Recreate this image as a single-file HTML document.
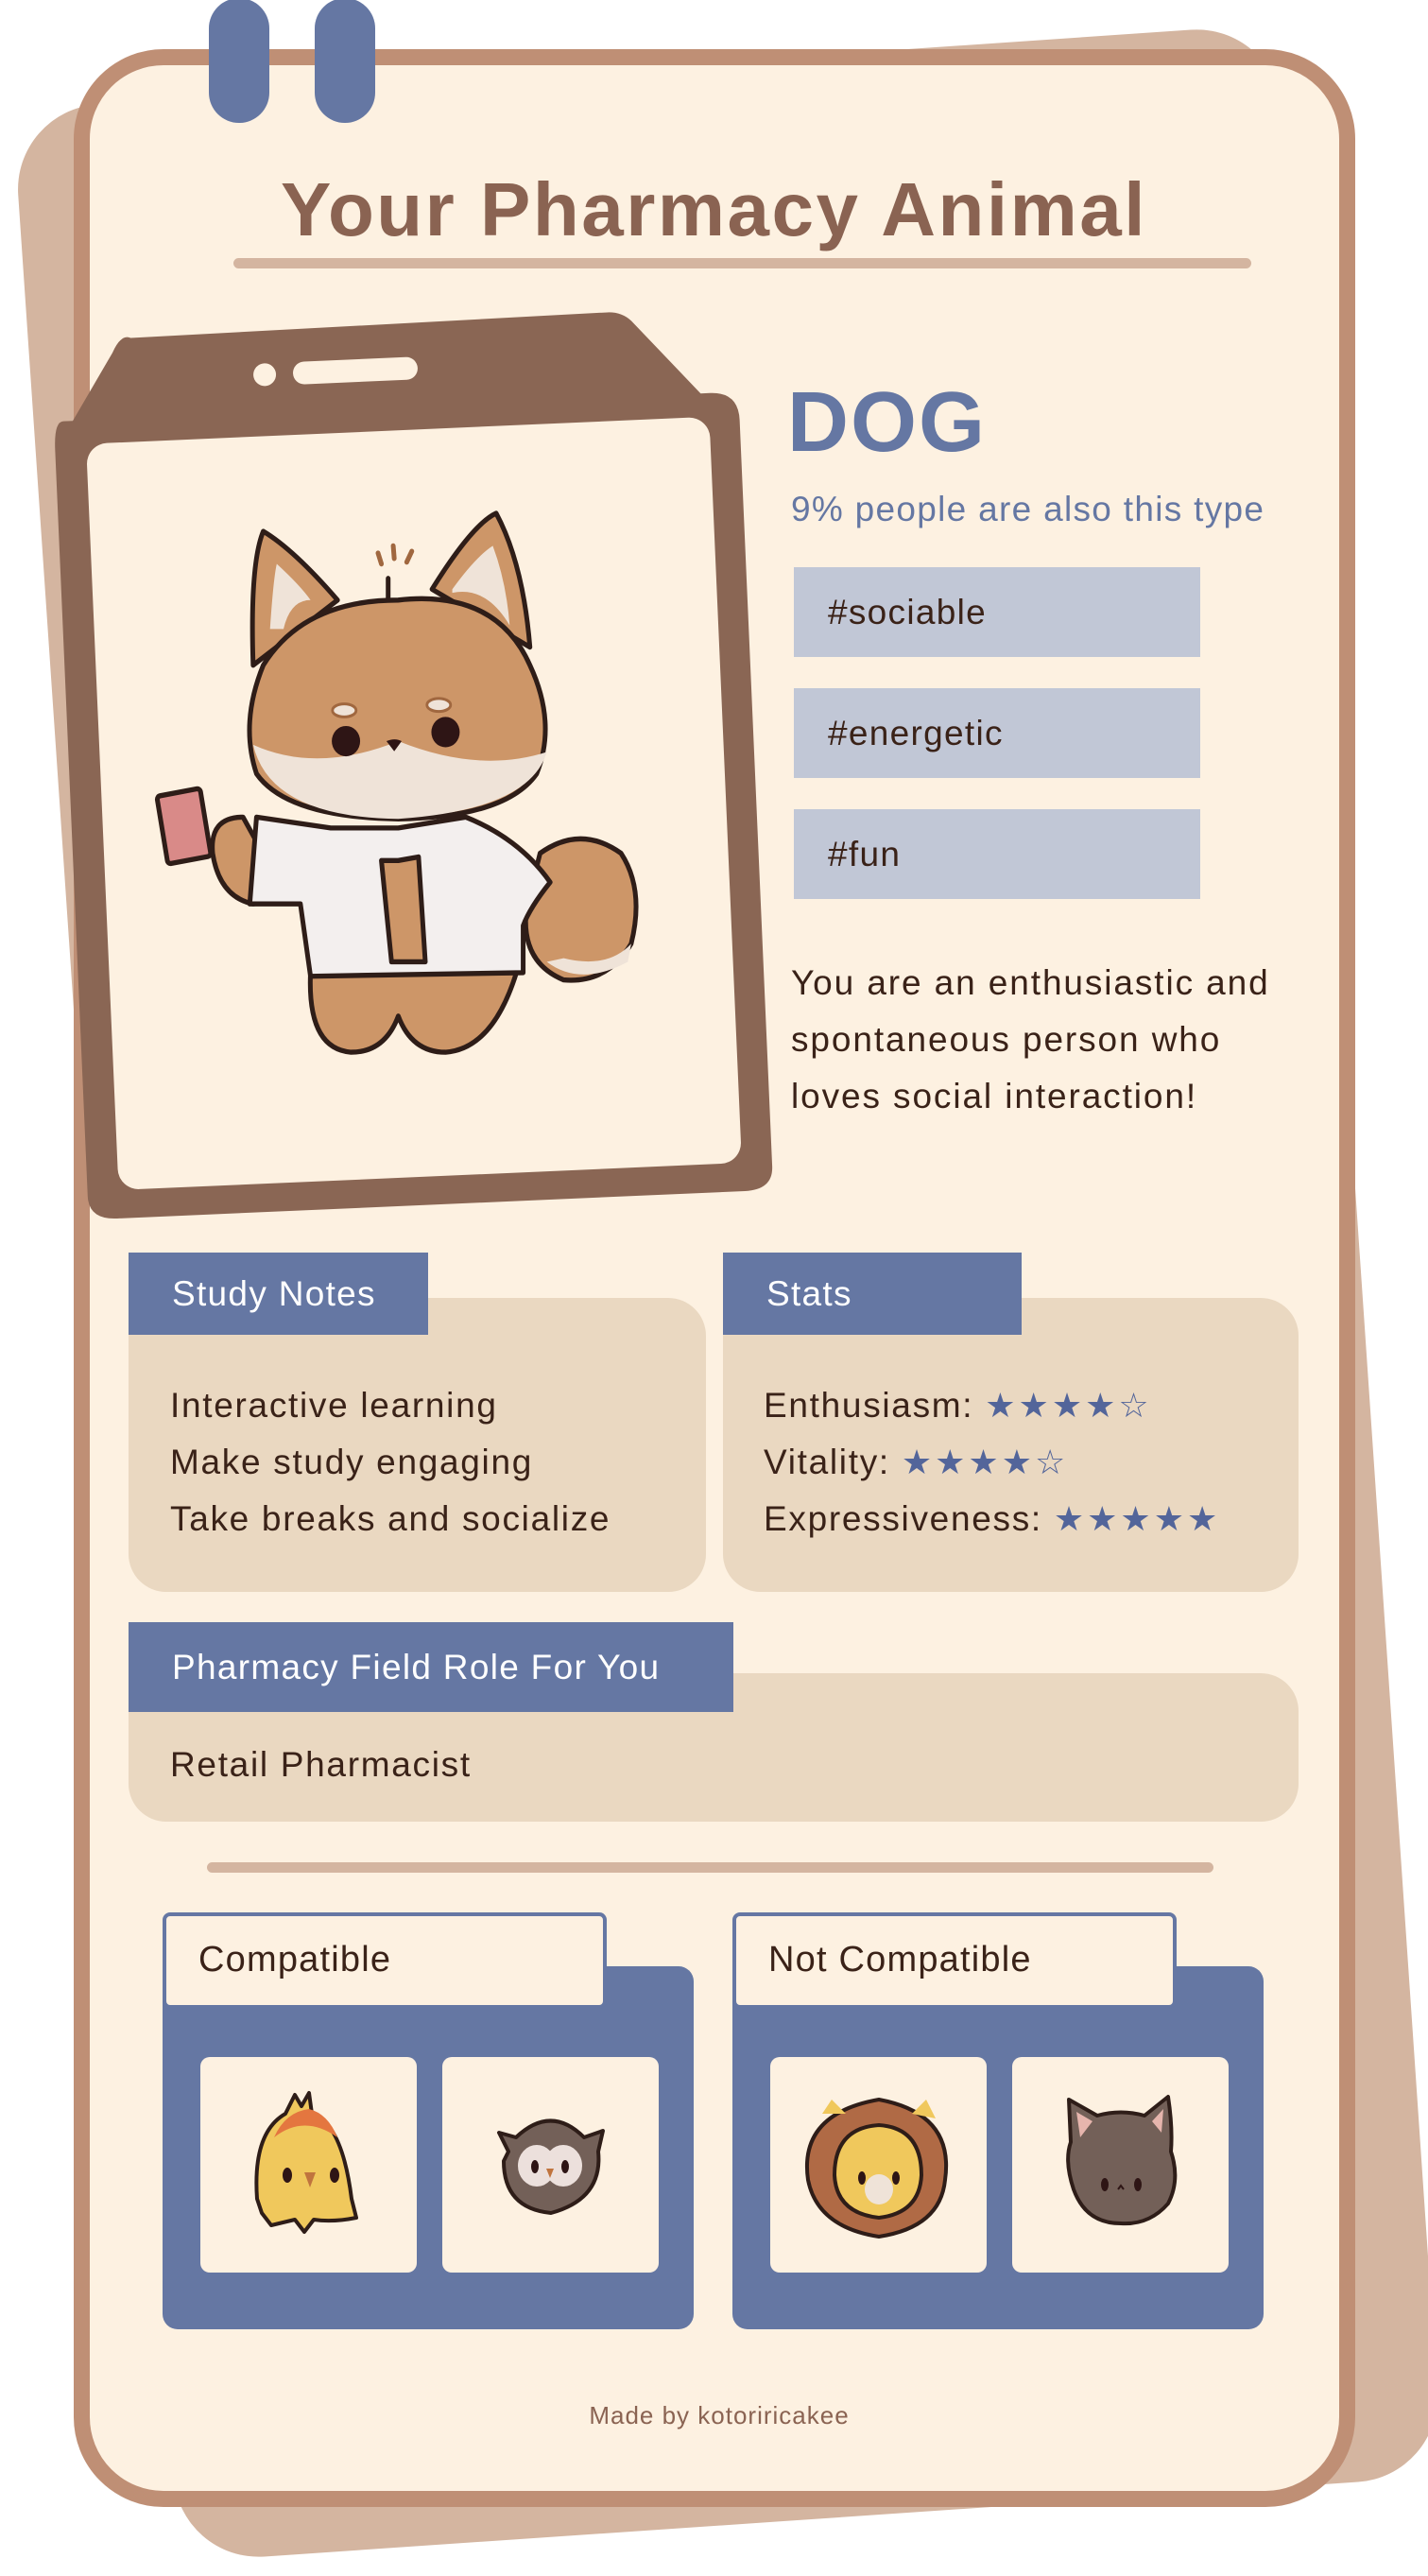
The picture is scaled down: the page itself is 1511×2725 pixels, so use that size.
<!DOCTYPE html>
<html><head><meta charset="utf-8"><style>
*{margin:0;padding:0;box-sizing:border-box}
body{width:1511px;height:2725px;background:#fff;position:relative;overflow:hidden;font-family:"Liberation Sans",sans-serif;color:#3a2218}
.abs{position:absolute}
.shadow{left:100px;top:68px;width:1340px;height:2600px;background:#d4b5a0;border-radius:90px;transform:rotate(-3.9deg)}
.card{left:78px;top:52px;width:1356px;height:2600px;background:#fdf1e1;border:17px solid #bf8f75;border-radius:95px}
.clip{width:64px;height:132px;background:#6577a3;border-radius:32px;top:-2px}
.title{left:0;width:1511px;top:176px;text-align:center;font-size:80px;font-weight:bold;color:#8a6352;letter-spacing:2.5px}
.bar{background:#d4b5a0;border-radius:6px}
.tag{left:840px;width:430px;height:95px;background:#c1c7d6;font-size:37px;letter-spacing:1.3px;line-height:95px;padding-left:36px;color:#3a2218}
.desc{left:837px;top:1010px;font-size:37px;letter-spacing:1.9px;line-height:60px;color:#3a2218}
.box{background:#ead8c1;border-radius:40px}
.hdr{background:#6577a3;color:#fff;font-size:37px;letter-spacing:1.3px;padding-left:46px}
.lines{font-size:37px;letter-spacing:1.7px;line-height:60px;color:#3a2218}
.star{color:#53659a;letter-spacing:3px;font-size:36px}
.panel{background:#6577a3;border-radius:16px}
.lbl{background:#fdf1e1;border:4px solid #6577a3;border-radius:8px;font-size:38px;letter-spacing:1.2px;padding-left:34px;line-height:92px;color:#3a2218}
.tile{background:#fdf1e1;border-radius:10px;width:229px;height:228px}
</style></head><body>
<div class="abs shadow"></div>
<div class="abs card"></div>
<div class="abs clip" style="left:221px"></div>
<div class="abs clip" style="left:333px"></div>
<div class="abs title">Your Pharmacy Animal</div>
<div class="abs bar" style="left:247px;top:273px;width:1077px;height:11px"></div>

<svg class="abs" style="left:0;top:0" width="900" height="1350" viewBox="0 0 900 1350">
<g transform="rotate(-2.5 435 850)">
<path d="M160 345 Q150 340 140 360 L95 430 L85 430 Q75 430 75 460 L75 1250 Q75 1275 105 1275 L770 1275 Q800 1275 800 1250 L800 460 Q800 430 770 430 L760 430 L690 350 Q680 340 665 340 Z" fill="#8a6654"/>
<rect x="108" y="455" width="660" height="790" rx="22" fill="#fdf1e1"/>
<circle cx="300" cy="390" r="12" fill="#fdf1e1"/>
<rect x="330" y="378" width="132" height="24" rx="12" fill="#fdf1e1"/>
</g>
</svg>

<svg class="abs" style="left:150px;top:520px" width="560" height="600" viewBox="0 0 1568 1568" preserveAspectRatio="none">
<g stroke="#2e1d18" stroke-width="14" stroke-linejoin="round" stroke-linecap="round">
<path d="M1180 1000 Q1300 920 1420 1000 Q1490 1100 1450 1250 Q1380 1360 1250 1350 Q1120 1300 1140 1150 Z" fill="#cd9668"/>
<path d="M1200 1300 Q1300 1370 1440 1300 L1450 1250 Q1380 1320 1250 1290 Z" fill="#efe3d8" stroke="none"/>
<path d="M330 480 Q320 200 360 110 Q450 160 580 300 Z" fill="#cd9668"/>
<path d="M860 270 Q980 90 1050 60 Q1130 200 1150 430 Z" fill="#cd9668"/>
<path d="M380 380 Q390 240 400 200 Q470 260 500 300 Q440 300 420 380 Z" fill="#efe3d8" stroke="none"/>
<path d="M920 270 Q990 180 1040 150 Q1080 250 1090 370 Q1020 260 920 280 Z" fill="#efe3d8" stroke="none"/>
<path d="M760 300 Q1050 270 1150 480 Q1230 640 1170 780 Q1080 900 760 905 Q430 900 340 780 Q290 640 360 480 Q480 300 760 300 Z" fill="#cd9668"/>
<path d="M330 700 Q520 780 760 690 Q1000 780 1200 720 Q1150 880 760 905 Q380 900 330 700 Z" fill="#efe3d8" stroke="none"/>
<path d="M300 900 Q200 900 210 1000 Q230 1120 330 1140 L430 1120 Z" fill="#cd9668"/>
<rect x="60" y="830" width="130" height="190" rx="10" fill="#d98a88" transform="rotate(-10 125 925)"/>
<path d="M500 1330 Q490 1540 620 1550 Q720 1550 760 1450 Q800 1550 900 1550 Q1040 1540 1110 1330 Z" fill="#cd9668"/>
<path d="M340 900 L560 930 L760 930 L960 900 Q1120 960 1210 1080 Q1150 1150 1130 1200 L1130 1330 L500 1340 L470 1140 L320 1140 Z" fill="#f3efee"/>
<path d="M710 1020 L760 1020 L820 1010 L840 1300 L740 1300 Z" fill="#cd9668"/>
<path d="M730 240 L730 300" fill="none"/>
</g>
<circle cx="605" cy="690" r="42" fill="#2e1515"/>
<circle cx="900" cy="665" r="42" fill="#2e1515"/>
<ellipse cx="600" cy="605" rx="35" ry="18" fill="#efe3d8" stroke="#a0673f" stroke-width="8"/>
<ellipse cx="880" cy="590" rx="35" ry="18" fill="#efe3d8" stroke="#a0673f" stroke-width="8"/>
<path d="M725 690 Q750 680 770 690 L748 718 Z" fill="#2e1515"/>
<path d="M700 170 L710 200 M745 150 L748 185 M800 165 L785 195" stroke="#a0673f" stroke-width="14" stroke-linecap="round"/>
</svg>

<div class="abs" style="left:833px;top:396px;font-size:90px;font-weight:bold;color:#6577a3;letter-spacing:2px">DOG</div>
<div class="abs" style="left:837px;top:518px;font-size:37px;letter-spacing:1.3px;color:#6577a3">9% people are also this type</div>
<div class="abs tag" style="top:600px">#sociable</div>
<div class="abs tag" style="top:728px">#energetic</div>
<div class="abs tag" style="top:856px">#fun</div>
<div class="abs desc">You are an enthusiastic and<br>spontaneous person who<br>loves social interaction!</div>

<div class="abs box" style="left:136px;top:1373px;width:611px;height:311px"></div>
<div class="abs hdr" style="left:136px;top:1325px;width:317px;height:87px;line-height:87px">Study Notes</div>
<div class="abs lines" style="left:180px;top:1457px">Interactive learning<br>Make study engaging<br>Take breaks and socialize</div>

<div class="abs box" style="left:765px;top:1373px;width:609px;height:311px"></div>
<div class="abs hdr" style="left:765px;top:1325px;width:316px;height:87px;line-height:87px">Stats</div>
<div class="abs lines" style="left:808px;top:1457px">Enthusiasm: <span class="star">★★★★☆</span><br>Vitality: <span class="star">★★★★☆</span><br>Expressiveness: <span class="star">★★★★★</span></div>

<div class="abs box" style="left:136px;top:1770px;width:1238px;height:157px"></div>
<div class="abs hdr" style="left:136px;top:1716px;width:640px;height:95px;line-height:95px">Pharmacy Field Role For You</div>
<div class="abs lines" style="left:180px;top:1837px">Retail Pharmacist</div>

<div class="abs bar" style="left:219px;top:1970px;width:1065px;height:11px"></div>

<div class="abs panel" style="left:172px;top:2080px;width:562px;height:384px"></div>
<div class="abs lbl" style="left:172px;top:2023px;width:470px;height:102px">Compatible</div>
<div class="abs panel" style="left:775px;top:2080px;width:562px;height:384px"></div>
<div class="abs lbl" style="left:775px;top:2023px;width:470px;height:102px">Not Compatible</div>

<div class="abs tile" style="left:212px;top:2176px"><svg width="229" height="228" viewBox="0 0 229 228">
<path d="M60 150 Q55 80 90 60 L100 40 L107 52 L115 38 L118 60 Q150 70 160 150 L165 170 Q140 175 120 172 L110 185 L100 172 L75 178 L65 165 Z" fill="#f0c85c" stroke="#2e1d18" stroke-width="4" stroke-linejoin="round"/>
<path d="M78 85 Q110 60 145 85 Q135 60 115 55 Q90 58 78 85Z" fill="#e4763f"/>
<ellipse cx="92" cy="125" rx="5" ry="8" fill="#2e1515"/><ellipse cx="142" cy="125" rx="5" ry="8" fill="#2e1515"/>
<path d="M110 122 L122 122 L116 138Z" fill="#c0743e"/></svg></div>
<div class="abs tile" style="left:468px;top:2176px"><svg width="229" height="228" viewBox="0 0 229 228">
<path d="M70 100 L60 80 L78 85 Q115 50 150 85 L170 78 L165 100 Q170 150 115 165 Q65 160 65 110 Z" fill="#736058" stroke="#2e1d18" stroke-width="4" stroke-linejoin="round"/>
<ellipse cx="100" cy="115" rx="20" ry="22" fill="#ece0dc"/><ellipse cx="128" cy="115" rx="20" ry="22" fill="#ece0dc"/>
<ellipse cx="98" cy="116" rx="4" ry="7" fill="#2e1515"/><ellipse cx="130" cy="116" rx="4" ry="7" fill="#2e1515"/>
<path d="M110 118 L118 118 L114 128Z" fill="#c0743e"/></svg></div>
<div class="abs tile" style="left:815px;top:2176px"><svg width="229" height="228" viewBox="0 0 229 228">
<path d="M40 130 Q30 60 115 45 Q195 60 185 130 Q180 180 115 190 Q50 180 40 130Z" fill="#b06a45" stroke="#2e1d18" stroke-width="4"/>
<path d="M55 60 L65 45 L80 60Z M150 60 L165 45 L175 65Z" fill="#f0c85c"/>
<path d="M68 125 Q68 75 115 72 Q160 75 160 125 Q158 165 115 170 Q70 165 68 125Z" fill="#f0c85c" stroke="#2e1d18" stroke-width="4"/>
<ellipse cx="115" cy="140" rx="15" ry="16" fill="#efe3d8"/>
<ellipse cx="97" cy="128" rx="4" ry="7" fill="#2e1515"/><ellipse cx="133" cy="128" rx="4" ry="7" fill="#2e1515"/></svg></div>
<div class="abs tile" style="left:1071px;top:2176px"><svg width="229" height="228" viewBox="0 0 229 228">
<path d="M65 140 Q55 110 62 90 L60 45 L90 62 Q115 55 140 62 L165 42 Q170 75 168 100 Q178 130 165 155 Q145 178 115 176 Q78 176 65 140Z" fill="#736058" stroke="#2e1d18" stroke-width="4" stroke-linejoin="round"/>
<path d="M68 58 L72 85 L85 68Z M160 55 L148 68 L158 80Z" fill="#e6b5ad"/>
<ellipse cx="98" cy="135" rx="4" ry="7" fill="#2e1515"/><ellipse cx="133" cy="135" rx="4" ry="7" fill="#2e1515"/>
<path d="M112 140 L115 136 L118 140" stroke="#2e1515" stroke-width="2" fill="none"/></svg></div>

<div class="abs" style="left:0;width:1522px;top:2540px;text-align:center;font-size:26px;letter-spacing:1px;color:#8a6352">Made by kotoriricakee</div>
</body></html>
